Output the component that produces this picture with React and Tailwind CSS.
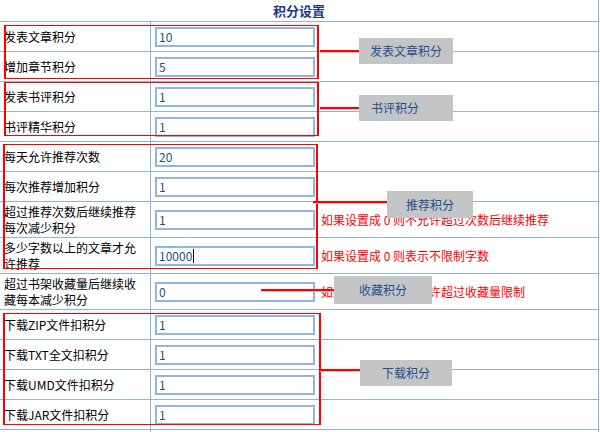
const rows = [
  { label: '发表文章积分', value: '10' },
  { label: '增加章节积分', value: '5' },
  { label: '发表书评积分', value: '1' },
  { label: '书评精华积分', value: '1' },
  { label: '每天允许推荐次数', value: '20' },
  { label: '每次推荐增加积分', value: '1' },
  { label: ['超过推荐次数后继续推荐', '每次减少积分'], value: '1', hint: '如果设置成 0 则不允许超过次数后继续推荐' },
  { label: ['多少字数以上的文章才允', '许推荐'], value: '10000', hint: '如果设置成 0 则表示不限制字数', caret: true },
  { label: ['超过书架收藏量后继续收', '藏每本减少积分'], value: '0', hint: '如果设置成 0 则不允许超过收藏量限制' },
  { label: '下载ZIP文件扣积分', value: '1' },
  { label: '下载TXT全文扣积分', value: '1' },
  { label: '下载UMD文件扣积分', value: '1' },
  { label: '下载JAR文件扣积分', value: '1' },
];

function Row({ label, value, hint, caret }) {
  const tall = Array.isArray(label);
  return (
    <div className={`flex border-b border-[#8db3e2] ${tall ? 'h-[36px]' : 'h-[30px]'}`}>
      <div className="w-[151px] shrink-0 border-r border-[#8db3e2] pl-[4px] flex flex-col justify-center leading-[16px] text-black">
        {tall ? label.map((l) => <span key={l}>{l}</span>) : <span>{label}</span>}
      </div>
      <div className="flex items-center pl-[4px]">
        <div className="w-[160px] h-[20px] border-2 border-[#93b4de] flex items-center pl-[2px] text-[#1f4e79]">
          {value}
          {caret && <span className="w-px h-[14px] bg-black ml-px" />}
        </div>
        {hint && <span className="ml-[6px] text-[#ff0000] whitespace-nowrap">{hint}</span>}
      </div>
    </div>
  );
}

function Group({ className }) {
  return <div className={`absolute border-y border-x-2 border-[#ff0000] ${className}`} />;
}

function Link({ className }) {
  return <div className={`absolute h-[3px] border-t-2 border-[#ff0000] border-b border-b-[#ffb4b4] ${className}`} />;
}

function Tag({ className, children }) {
  return (
    <div className={`absolute bg-[#c4c5c7] text-[#1f4e8a] flex items-center ${className}`}>
      {children}
    </div>
  );
}

export default function App() {
  return (
    <div
      className="relative w-[600px] h-[432px] bg-white overflow-hidden text-[12px]"
      style={{ fontFamily: '"Noto Sans CJK SC", "Noto Sans", sans-serif' }}
    >
      <div className="w-[599px] border-r border-[#8db3e2]">
        <div className="h-[22px] border-b border-[#8db3e2] flex items-center justify-center font-bold text-[13px] text-[#1a3a8a]">
          积分设置
        </div>
        {rows.map((r, i) => (
          <Row key={i} {...r} />
        ))}
        <div className="flex h-[30px]">
          <div className="w-[151px] border-r border-[#8db3e2]" />
        </div>
      </div>

      <Group className="left-[4px] top-[25px] w-[315px] h-[54px]" />
      <Group className="left-[4px] top-[82px] w-[315px] h-[54px]" />
      <Group className="left-[3px] top-[144px] w-[315px] h-[125px]" />
      <Group className="left-[3px] top-[313px] w-[318px] h-[112px]" />

      <Link className="left-[320px] top-[50px] w-[39px]" />
      <Link className="left-[320px] top-[107px] w-[39px]" />
      <Link className="left-[313px] top-[201px] w-[74px]" />
      <Link className="left-[261px] top-[289px] w-[73px]" />
      <Link className="left-[320px] top-[369px] w-[40px]" />

      <Tag className="left-[359px] top-[38px] w-[94px] h-[26px] justify-center">发表文章积分</Tag>
      <Tag className="left-[359px] top-[95px] w-[94px] h-[26px] pl-[12px]">书评积分</Tag>
      <Tag className="left-[387px] top-[191px] w-[86px] h-[27px] justify-center">推荐积分</Tag>
      <Tag className="left-[334px] top-[276px] w-[98px] h-[28px] justify-center">收藏积分</Tag>
      <Tag className="left-[360px] top-[360px] w-[92px] h-[26px] justify-center">下载积分</Tag>
    </div>
  );
}
